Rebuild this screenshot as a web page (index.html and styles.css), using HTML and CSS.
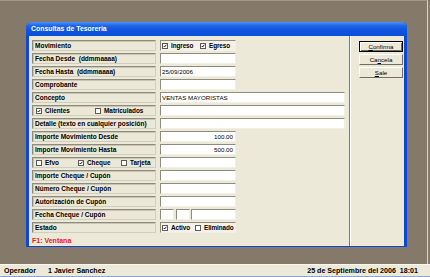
FILE: index.html
```html
<!DOCTYPE html>
<html>
<head>
<meta charset="utf-8">
<link rel="stylesheet" href="styles.css">
</head>
<body>
<div class="screen">
  <div class="desktop">
    <div class="window">
      <div class="titlebar">Consultas de Tesoreria</div>
      <div class="wbody">
        <div class="form">
          <div class="row"><div class="lbl">Movimiento</div><div class="fld short chk"><span class="cb on"><svg viewBox="0 0 6 6"><polyline points="1,3 2.3,4.5 5,1.2"/></svg></span><span class="ct w-ing">Ingreso</span><span class="cb on"><svg viewBox="0 0 6 6"><polyline points="1,3 2.3,4.5 5,1.2"/></svg></span><span class="ct">Egreso</span></div></div>
          <div class="row"><div class="lbl">Fecha Desde &nbsp;(ddmmaaaa)</div><div class="fld short"></div></div>
          <div class="row"><div class="lbl">Fecha Hasta &nbsp;(ddmmaaaa)</div><div class="fld short">25/09/2006</div></div>
          <div class="row"><div class="lbl">Comprobante</div><div class="fld short"></div></div>
          <div class="row"><div class="lbl">Concepto</div><div class="fld long">VENTAS MAYORISTAS</div></div>
          <div class="row"><div class="lbl lchk"><span class="cb on"><svg viewBox="0 0 6 6"><polyline points="1,3 2.3,4.5 5,1.2"/></svg></span><span class="ct w-cli">Clientes</span><span class="cb"></span><span class="ct">Matriculados</span></div><div class="fld long"></div></div>
          <div class="row"><div class="lbl">Detalle (texto en cualquier posición)</div><div class="fld long"></div></div>
          <div class="row"><div class="lbl">Importe Movimiento Desde</div><div class="fld short num">100.00</div></div>
          <div class="row"><div class="lbl">Importe Movimiento Hasta</div><div class="fld short num">500.00</div></div>
          <div class="row"><div class="lbl lchk"><span class="cb"></span><span class="ct w-efvo">Efvo</span><span class="cb on"><svg viewBox="0 0 6 6"><polyline points="1,3 2.3,4.5 5,1.2"/></svg></span><span class="ct w-chq">Cheque</span><span class="cb"></span><span class="ct">Tarjeta</span></div><div class="fld short"></div></div>
          <div class="row"><div class="lbl">Importe Cheque / Cupón</div><div class="fld short"></div></div>
          <div class="row"><div class="lbl">Número Cheque / Cupón</div><div class="fld short"></div></div>
          <div class="row"><div class="lbl">Autorización de Cupón</div><div class="fld short"></div></div>
          <div class="row"><div class="lbl">Fecha Cheque / Cupón</div><div class="fgroup"><div class="fld tiny"></div><div class="fld tiny"></div><div class="fld year"></div></div></div>
          <div class="row"><div class="lbl">Estado</div><div class="fld short chk"><span class="cb on"><svg viewBox="0 0 6 6"><polyline points="1,3 2.3,4.5 5,1.2"/></svg></span><span class="ct w-act">Activo</span><span class="cb"></span><span class="ct">Eliminado</span></div></div>
          <div class="f1">F1: Ventana</div>
        </div>
        <div class="sep"></div>
        <div class="buttons">
          <div class="btn default"><u>C</u>onfirma</div>
          <div class="btn">Ca<u>n</u>cela</div>
          <div class="btn"><u>S</u>ale</div>
        </div>
      </div>
    </div>
  </div>
  <div class="status">
    <span class="op">Operador</span>
    <span class="user">1 Javier Sanchez</span>
    <span class="date">25 de Septiembre del 2006 &nbsp;18:01</span>
  </div>
</div>
</body>
</html>
```

FILE: styles.css
```css
* { box-sizing: border-box; margin: 0; padding: 0; }
html, body { width: 430px; height: 277px; overflow: hidden; }
body {
  margin: 0;
  background: #857a69;
  font-family: "Liberation Sans", Arial, sans-serif;
  color: #000;
}
.screen { display: flex; flex-direction: column; width: 430px; height: 277px; }
.desktop {
  width: 428px;
  height: 264px;
  background: #857a69;
  border-top: 1px solid #a09784;
  border-right: 1px solid #d8d4c8;
  padding: 21px 0 0 26px;
}
.window {
  width: 381px;
  height: 225px;
  display: flex;
  flex-direction: column;
  background: #0d47d8;
  border-radius: 5px 5px 0 0;
  overflow: hidden;
}
.titlebar {
  height: 14px;
  flex: none;
  padding-left: 5px;
  color: #fff;
  font-weight: bold;
  font-size: 6.9px;
  line-height: 14px;
  background: linear-gradient(#4a93f8 0, #2467e6 25%, #0f55e0 55%, #0a4fd8 100%);
}
.wbody {
  flex: 1;
  margin: 0 3px 3px 3px;
  background: #ece9d8;
  display: flex;
}
.form {
  width: 320px;
  padding: 4px 0 0 3px;
  display: flex;
  flex-direction: column;
  gap: 2px;
}
.row { display: flex; gap: 4px; height: 11px; }
.lbl {
  width: 124px;
  height: 11px;
  padding-left: 2px;
  font-size: 6.5px;
  font-weight: bold;
  line-height: 9px;
  white-space: nowrap;
  border: 1px solid;
  border-color: #8e8b7f #d2cebf #d2cebf #8e8b7f;
  box-shadow: inset 1px 1px 0 #c9c5b5;
  background: #ebe8d8;
}
.lchk { display: flex; align-items: center; padding-left: 3px; }
.fld {
  height: 11px;
  background: #fff;
  border: 1px solid;
  border-color: #8e8b7f #f1efe6 #f1efe6 #8e8b7f;
  font-size: 6.2px;
  line-height: 9px;
  padding-left: 1px;
  white-space: nowrap;
  overflow: hidden;
}
.short { width: 76px; }
.long { width: 185px; }
.num { text-align: right; padding-right: 2px; }
.fgroup { display: flex; gap: 2px; }
.tiny { width: 14px; }
.year { width: 45px; margin-left: -1px; }
.chk {
  display: flex;
  align-items: center;
  padding-left: 1px;
  background: #f3f1e8;
  font-weight: bold;
  font-size: 6.4px;
  letter-spacing: -0.1px;
}
.cb {
  flex: none;
  width: 6px;
  height: 6px;
  background: #fff;
  border: 1px solid #5b5b5b;
  display: inline-flex;
  margin-right: 3px;
}
.cb svg { width: 4px; height: 4px; }
.cb polyline { fill: none; stroke: #000; stroke-width: 1.3; }
.ct { flex: none; font-weight: bold; font-size: 6.4px; margin-right: 6px; }
.w-ing { width: 29px; margin-right: 0; }
.w-cli { width: 50px; margin-right: 0; }
.w-efvo { width: 33px; margin-right: 0; }
.w-chq { width: 34px; margin-right: 0; }
.w-act { width: 24px; margin-right: 0; }
.f1 {
  margin-top: 0;
  color: #f01818;
  font-weight: bold;
  font-size: 7px;
  line-height: 11px;
}
.sep {
  width: 2px;
  border-left: 1px solid #807d70;
  border-right: 1px solid #fff;
}
.buttons {
  padding: 5px 0 0 8px;
  display: flex;
  flex-direction: column;
  gap: 2px;
}
.btn {
  width: 44px;
  height: 11px;
  background: #ece9d8;
  border: 1px solid;
  border-color: #fff #716f64 #716f64 #fff;
  font-size: 6.2px;
  line-height: 9px;
  text-align: center;
}
.btn.default {
  border-color: #000;
  box-shadow: inset 1px 1px 0 #fff, inset -1px -1px 0 #716f64;
}
.status {
  height: 13px;
  background: #ece9d8;
  border-top: 1px solid #f8f7f2;
  border-bottom: 1px solid #8aa6d8;
  display: flex;
  align-items: center;
  padding-left: 4px;
  font-size: 7.1px;
  font-weight: bold;
  white-space: nowrap;
}
.op { width: 44px; }
.user { flex: 1; }
.date { padding-right: 12px; }
```
